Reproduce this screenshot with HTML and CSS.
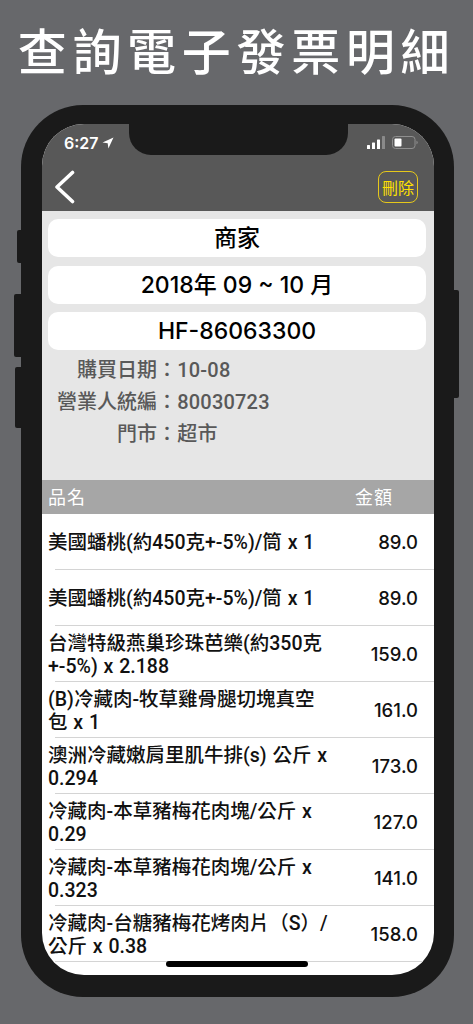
FILE: index.html
```html
<!DOCTYPE html>
<html lang="zh-Hant">
<head>
<meta charset="utf-8">
<title>查詢電子發票明細</title>
<link rel="stylesheet" href="styles.css">
</head>
<body>
<h1 class="headline">查詢電子發票明細</h1>
<div class="phone">
  <span class="side side-mute"></span>
  <span class="side side-up"></span>
  <span class="side side-down"></span>
  <span class="side side-power"></span>
  <div class="screen">
    <div class="notch"></div>
    <div class="topbar">
      <div class="status">
        <div class="time">6:27
          <svg class="loc" viewBox="0 0 12 12"><path d="M11.5.5 .5 5.6l5.2.7.7 5.2z" fill="#fff"/></svg>
        </div>
        <div class="status-right">
          <svg class="signal" viewBox="0 0 18 13"><rect x="0" y="9" width="3" height="4" rx=".6" fill="#fff"/><rect x="5" y="6.5" width="3" height="6.5" rx=".6" fill="#fff"/><rect x="10" y="3.5" width="3" height="9.5" rx=".6" fill="#fff"/><rect x="15" y="0" width="3" height="13" rx=".6" fill="#8a8a8a"/></svg>
          <svg class="battery" viewBox="0 0 26 13"><rect x=".5" y=".5" width="22.5" height="12" rx="3" fill="none" stroke="#8f8f8f"/><rect x="2.5" y="2.5" width="7" height="8" rx="1" fill="#fff"/><path d="M24.5 4.8c.8.2 1.2.9 1.2 1.7s-.4 1.5-1.2 1.7z" fill="#8f8f8f"/></svg>
        </div>
      </div>
      <div class="nav">
        <svg class="back" viewBox="0 0 22 34"><path d="M18.5 2.5 3 17l15.5 14.5" fill="none" stroke="#fff" stroke-width="3.6" stroke-linecap="round" stroke-linejoin="round"/></svg>
        <button class="delete">刪除</button>
      </div>
    </div>
    <div class="info">
      <div class="pill">商家</div>
      <div class="pill">2018年 09 ~ 10 月</div>
      <div class="pill">HF-86063300</div>
      <dl class="facts">
        <div class="fact"><dt>購買日期</dt><dd>：10-08</dd></div>
        <div class="fact"><dt>營業人統編</dt><dd>：80030723</dd></div>
        <div class="fact"><dt>門市</dt><dd>：超市</dd></div>
      </dl>
    </div>
    <div class="thead"><span>品名</span><span class="thead-amount">金額</span></div>
    <div class="rows">
      <div class="row"><div class="name">美國蟠桃(約450克+-5%)/筒 x 1</div><div class="amount">89.0</div></div>
      <div class="row"><div class="name">美國蟠桃(約450克+-5%)/筒 x 1</div><div class="amount">89.0</div></div>
      <div class="row"><div class="name">台灣特級燕巢珍珠芭樂(約350克<br>+-5%) x 2.188</div><div class="amount">159.0</div></div>
      <div class="row"><div class="name">(B)冷藏肉-牧草雞骨腿切塊真空<br>包 x 1</div><div class="amount">161.0</div></div>
      <div class="row"><div class="name">澳洲冷藏嫩肩里肌牛排(s) 公斤 x<br>0.294</div><div class="amount">173.0</div></div>
      <div class="row"><div class="name">冷藏肉-本草豬梅花肉塊/公斤 x<br>0.29</div><div class="amount">127.0</div></div>
      <div class="row"><div class="name">冷藏肉-本草豬梅花肉塊/公斤 x<br>0.323</div><div class="amount">141.0</div></div>
      <div class="row"><div class="name">冷藏肉-台糖豬梅花烤肉片（S）/<br>公斤 x 0.38</div><div class="amount">158.0</div></div>
    </div>
    <div class="home"></div>
  </div>
</div>
</body>
</html>
```

FILE: styles.css
```css
* { box-sizing: border-box; }
html, body { margin: 0; padding: 0; }
body {
  width: 473px;
  height: 1024px;
  overflow: hidden;
  background: #67686b;
  font-family: "Liberation Sans", "Noto Sans CJK TC", sans-serif;
}
.headline {
  margin: 0;
  height: 105px;
  padding-top: 19px;
  text-align: center;
  color: #fff;
  font-family: "Noto Sans CJK TC", sans-serif;
  font-size: 49px;
  font-weight: 500;
  line-height: 60px;
  letter-spacing: 5.7px;
}
.phone {
  position: relative;
  width: 433px;
  height: 892px;
  margin-left: 21px;
  padding: 19px 20px 22px 21px;
  background: #1a1a1a;
  border-radius: 62px;
}
.side { position: absolute; background: #1a1a1a; }
.side-mute { left: -4px; top: 125px; width: 5px; height: 33px; border-radius: 2px 0 0 2px; }
.side-up { left: -7px; top: 189px; width: 8px; height: 63px; border-radius: 2px 0 0 2px; }
.side-down { left: -6px; top: 262px; width: 7px; height: 61px; border-radius: 2px 0 0 2px; }
.side-power { right: -5px; top: 185px; width: 6px; height: 108px; border-radius: 0 2px 2px 0; }
.screen {
  position: relative;
  height: 851px;
  overflow: hidden;
  background: #fff;
  border-radius: 42px;
  display: flex;
  flex-direction: column;
}
.notch {
  position: absolute;
  left: 87px;
  top: 0;
  width: 219px;
  height: 31px;
  background: #1a1a1a;
  border-radius: 0 0 22px 22px;
}
.topbar {
  height: 87px;
  flex: none;
  background: #585858;
  padding: 10px 16px 0 22px;
}
.status {
  display: flex;
  justify-content: space-between;
  align-items: center;
  height: 17px;
}
.time {
  display: flex;
  align-items: center;
  gap: 3px;
  color: #fff;
  font-family: Inter, "Liberation Sans", sans-serif;
  font-size: 16px;
  font-weight: 600;
}
.loc { width: 12px; height: 12px; }
.status-right { display: flex; align-items: center; gap: 7px; }
.signal { width: 18px; height: 13px; }
.battery { width: 26px; height: 13px; }
.nav {
  display: flex;
  justify-content: space-between;
  align-items: center;
  margin-top: 19px;
  margin-left: -10px;
}
.back { width: 22px; height: 34px; }
.delete {
  width: 40px;
  height: 32px;
  padding: 0;
  border: 1px solid #e6c81a;
  border-radius: 8px;
  background: transparent;
  color: #ffe000;
  font-family: "Noto Sans CJK TC", sans-serif;
  font-size: 16px;
  line-height: 30px;
}
.info {
  height: 269px;
  flex: none;
  background: #e6e6e6;
  padding: 8px 8px 0 6px;
  display: flex;
  flex-direction: column;
  gap: 8.5px;
}
.pill {
  height: 38px;
  flex: none;
  background: #fff;
  border-radius: 10px;
  text-align: center;
  color: #000;
  font-family: Inter, "Noto Sans CJK TC", sans-serif;
  font-size: 23px;
  font-weight: 500;
  line-height: 39px;
}
.facts { margin: -6px 0 0; display: flex; flex-direction: column; }
.fact {
  display: flex;
  height: 32px;
  align-items: center;
  color: #595959;
  font-family: Roboto, "Noto Sans CJK TC", sans-serif;
  font-size: 20px;
  font-weight: 500;
  letter-spacing: .2px;
}
.fact dt { width: 109px; text-align: right; letter-spacing: 0; }
.fact dd { margin: 0; }
.thead {
  height: 34px;
  flex: none;
  display: flex;
  justify-content: space-between;
  align-items: center;
  background: #a6a6a6;
  color: #fff;
  padding: 0 41px 3px 6px;
  font-family: "Noto Sans CJK TC", sans-serif;
  font-size: 18px;
  letter-spacing: 1px;
}
.row {
  position: relative;
  height: 56px;
  display: flex;
  align-items: center;
  justify-content: space-between;
  padding: 0 16px 0 6px;
  color: #111;
  font-family: Roboto, "Noto Sans CJK TC", sans-serif;
  font-size: 19.5px;
  font-weight: 500;
  line-height: 23px;
}
.row::after {
  content: "";
  position: absolute;
  left: 13px;
  right: 0;
  bottom: 0;
  height: 1px;
  background: #d4d4d4;
}
.name { white-space: nowrap; word-spacing: 1px; padding-top: 1px; }
.amount { white-space: nowrap; font-family: Inter, sans-serif; font-size: 18.5px; }
.home {
  position: absolute;
  left: 124px;
  bottom: 8px;
  width: 142px;
  height: 6px;
  background: #000;
  border-radius: 3px;
}
```
